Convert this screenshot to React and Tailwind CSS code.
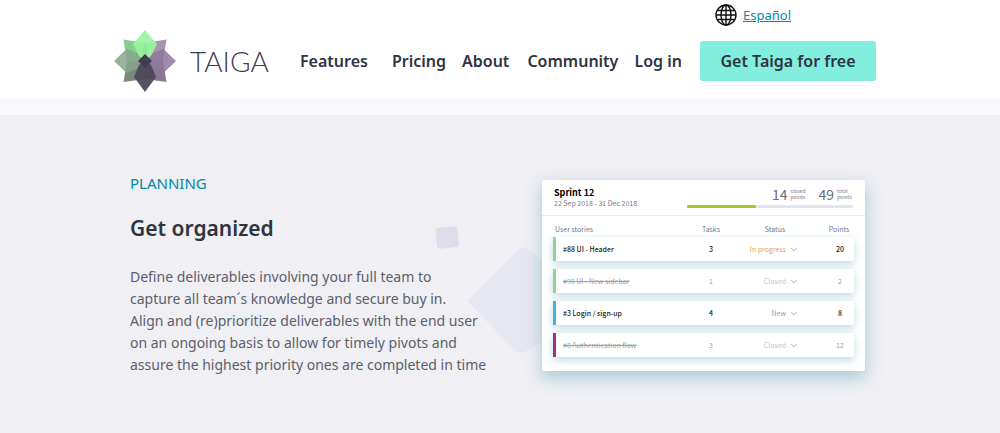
import React from "react";

const links = [
  { label: "Features", gap: "mr-6" },
  { label: "Pricing", gap: "mr-4" },
  { label: "About", gap: "mr-[18px]" },
  { label: "Community", gap: "mr-4" },
  { label: "Log in", gap: "mr-4" },
];

const stories = [
  { name: "#88 UI - Header", tasks: 3, status: "In progress", points: 20, bar: "border-[#8fd694]", tone: "text-[#e0a060]", done: false },
  { name: "#98 UI - New sidebar", tasks: 1, status: "Closed", points: 2, bar: "border-[#8fd694]", tone: "text-[#c4c4ca]", done: true },
  { name: "#3 Login / sign-up", tasks: 4, status: "New", points: 8, bar: "border-[#4aaede]", tone: "text-[#a0a0a8]", done: false },
  { name: "#8 Authentication flow", tasks: 3, status: "Closed", points: 12, bar: "border-[#a0308c]", tone: "text-[#c4c4ca]", done: true },
];

function Logo() {
  return (
    <svg viewBox="0 0 62 62" className="size-[62px] shrink-0" aria-hidden="true">
      <path d="M9.500 9.500L31 13V31H13Z" fill="#86cf90" />
      <path d="M52.500 9.500L31 13V31H49Z" fill="#a595b0" />
      <path d="M9.500 52L31 49V31H13Z" fill="#788a7e" />
      <path d="M52.500 52L31 49V31H49Z" fill="#8a7792" />
      <path d="M0 31L12.500 19L25 24L31 31L25 38L12.500 43Z" fill="#86a58c" fillOpacity=".85" />
      <path d="M62 31L49.500 19L37 24L31 31L37 38L49.500 43Z" fill="#8f769f" fillOpacity=".85" />
      <path d="M31 0L43 14L37 26L31 31L25 26L19 14Z" fill="#98f5a0" fillOpacity=".92" />
      <path d="M31 12L34 24L31 31L28 24Z" fill="#7ee88b" fillOpacity=".6" />
      <path d="M31 62L20 47L25 35L31 31L37 35L42 47Z" fill="#4b4557" fillOpacity=".92" />
      <path d="M31 24L38 31L31 38L24 31Z" fill="#3f3d4c" />
    </svg>
  );
}

function Globe() {
  return (
    <svg viewBox="0 0 22 22" className="size-[22px]" fill="none" stroke="#111" strokeWidth="1.4" aria-hidden="true">
      <circle cx="11" cy="11" r="10" />
      <ellipse cx="11" cy="11" rx="5" ry="10" />
      <path d="M11 1v20M1 11h20M2.500 6.500h17M2.500 15.500h17" />
    </svg>
  );
}

function Total({ value, label }) {
  return (
    <div className="flex items-center gap-[3px]">
      <span className="text-[14px] leading-4 text-[#6c6c80]">{value}</span>
      <span className="w-4 text-[5px] leading-[6px] text-[#77778a]">{label} points</span>
    </div>
  );
}

function SprintCard() {
  return (
    <div className="relative w-[323px] rounded-xs bg-white pb-[14px] font-['Noto_Sans_CJK_SC','Noto_Sans',sans-serif] shadow-[0_6px_16px_rgba(90,165,180,0.5)]">
      <div className="flex h-9 items-start justify-between border-b border-[#e8e8ee] pr-3 pl-3">
        <div className="pt-[7px]">
          <h3 className="text-[9px] leading-3 font-bold text-black">Sprint 12</h3>
          <p className="text-[7px] leading-2 text-[#77778a]">22 Sep 2018 - 31 Dec 2018</p>
        </div>
        <div className="w-[166px] pt-[6px]">
          <div className="flex justify-end gap-3">
            <Total value="14" label="closed" />
            <Total value="49" label="total" />
          </div>
          <div className="mt-[3px] h-[3px] rounded-full bg-[#e2e4ef]">
            <div className="h-full w-[69px] rounded-full bg-[#a0c828]" />
          </div>
        </div>
      </div>
      <table className="block px-[11px] text-[7px] leading-3">
        <thead className="block">
          <tr className="grid h-[21px] grid-cols-[1fr_42px_66px_56px] items-center pt-1 text-[#77778a]">
            <th className="pl-[2px] text-left font-normal">User stories</th>
            <th className="font-normal">Tasks</th>
            <th className="pl-5 font-normal">Status</th>
            <th className="pl-[26px] font-normal">Points</th>
          </tr>
        </thead>
        <tbody className="flex flex-col gap-2">
          {stories.map((s) => (
            <tr
              key={s.name}
              className={`grid h-6 grid-cols-[1fr_42px_66px_56px] items-center border-l-[3px] bg-white shadow-[0_3px_8px_rgba(90,165,180,0.4)] ${s.bar} ${s.done ? "text-[#a0a0a8]" : "text-[#222]"}`}
            >
              <td className={s.done ? "pl-[7px] line-through" : "pl-[7px] font-medium"}>{s.name}</td>
              <td className={s.done ? "text-center" : "text-center font-medium"}>{s.tasks}</td>
              <td className={`flex items-center justify-end gap-1 ${s.tone}`}>
                {s.status}
                <svg viewBox="0 0 8 5" className="h-[5px] w-2" fill="none" stroke="#b8b8c0" aria-hidden="true">
                  <path d="M1 1l3 3l3-3" />
                </svg>
              </td>
              <td className={s.done ? "pl-7 text-center" : "pl-7 text-center font-medium"}>{s.points}</td>
            </tr>
          ))}
        </tbody>
      </table>
    </div>
  );
}

export default function App() {
  return (
    <div className="flex min-h-screen flex-col bg-white font-['Noto_Sans',sans-serif] text-[#2e3440]">
      <header className="mx-auto w-full max-w-[772px] pb-2">
        <div className="flex h-[30px] items-center justify-end gap-[6px] pr-[95px]">
          <Globe />
          <a href="#es" className="text-[13px] leading-4 text-[#008aa8] underline">Español</a>
        </div>
        <div className="flex h-[61px] items-center pr-[10px]">
          <a href="#home" className="flex w-[186px] shrink-0 items-center gap-[14px]">
            <Logo />
            <span className="font-['Lato',sans-serif] text-[28px] leading-8 font-light text-[#3f3d4c]">TAIGA</span>
          </a>
          <nav className="flex items-center text-[16px] font-semibold whitespace-nowrap">
            {links.map((l) => (
              <a key={l.label} href="#nav" className={l.gap}>{l.label}</a>
            ))}
          </nav>
          <button className="ml-auto h-10 w-44 shrink-0 rounded-[3px] bg-[#83eedd] text-[16px] font-semibold whitespace-nowrap">
            Get Taiga for free
          </button>
        </div>
      </header>
      <div className="h-4 bg-[#f8f8fc]" />
      <main className="grow bg-[#efeff4]">
        <section className="mx-auto flex w-full max-w-[740px] items-start justify-between pt-[57px]">
          <div className="w-[360px] whitespace-nowrap">
            <p className="text-[15px] leading-[22px] text-[#008aa8]">PLANNING</p>
            <h2 className="mt-5 text-[21px] leading-7 font-semibold">Get organized</h2>
            <p className="mt-6 text-[14px] leading-[22px] text-[#5c5f6b]">
              Define deliverables involving your full team to<br />
              capture all team´s knowledge and secure buy in.<br />
              Align and (re)prioritize deliverables with the end user<br />
              on an ongoing basis to allow for timely pivots and<br />
              assure the highest priority ones are completed in time
            </p>
          </div>
          <div className="relative mt-2 mr-[5px]">
            <svg viewBox="0 0 110 140" className="absolute top-[42px] -left-[108px] h-[140px] w-[110px]" aria-hidden="true">
              <rect x="2" y="5" width="22" height="21" rx="3" fill="#dedeeb" transform="rotate(-6 13 15)" />
              <path d="M34 78L85 27Q88 24 92 26L110 40V119L90 130Q86 132 82 129L34 80Z" fill="#e6e7f1" />
            </svg>
            <SprintCard />
          </div>
        </section>
      </main>
    </div>
  );
}
